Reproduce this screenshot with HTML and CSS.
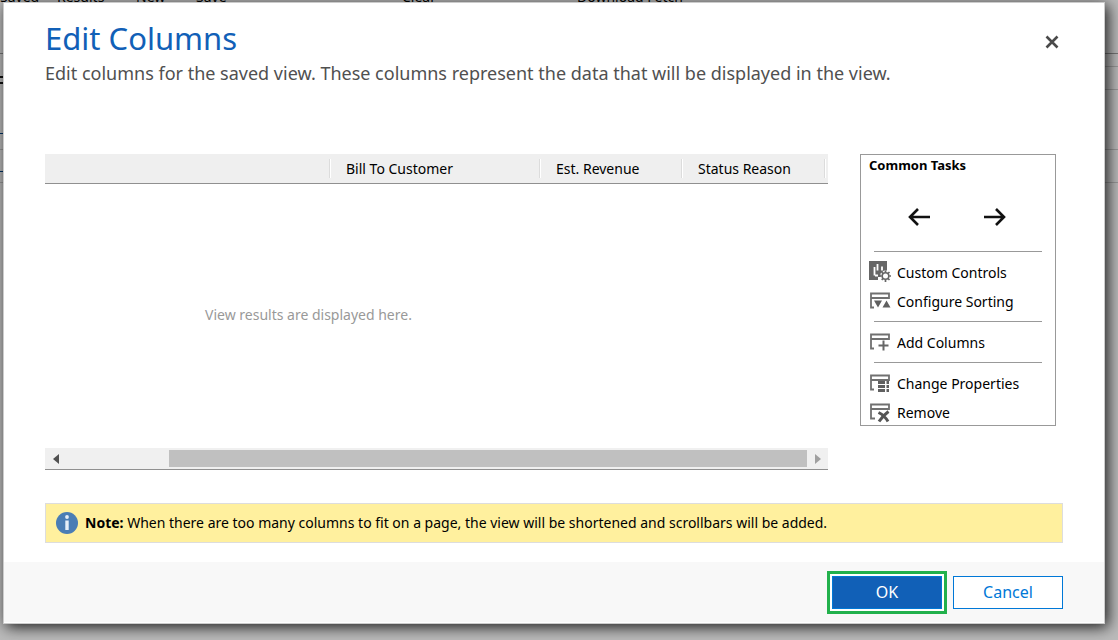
FILE: index.html
```html
<!DOCTYPE html>
<html lang="en">
<head>
<meta charset="utf-8">
<title>Edit Columns</title>
<link rel="stylesheet" href="styles.css">
</head>
<body>
<div class="backdrop" aria-hidden="true">
  <span class="ribbon r-saved">Saved</span><span class="ribbon r-results">Results</span><span class="ribbon r-new">New</span><span class="ribbon r-save">Save</span><span class="ribbon r-clear">Clear</span><span class="ribbon r-fetch">Download Fetch</span>
  <i class="rule rule-a"></i><i class="rule rule-b"></i><i class="rule rule-c"></i><i class="rule rule-d"></i><i class="rule rule-e"></i>
  <i class="mark mark-a"></i><i class="mark mark-b"></i><i class="mark link-a"></i><i class="mark link-b"></i>
</div>
<main class="dialog" role="dialog" aria-labelledby="title">
  <header class="head">
    <div class="heading">
      <h1 class="title" id="title">Edit Columns</h1>
      <p class="subtitle">Edit columns for the saved view. These columns represent the data that will be displayed in the view.</p>
    </div>
    <button class="close" type="button" aria-label="Close"><svg width="14" height="14" viewBox="0 0 14 14"><path d="M1.500 1.500l11 11M12.500 1.500l-11 11" stroke="#4a4a4a" stroke-width="2.600" fill="none"/></svg></button>
  </header>
  <div class="content">
    <section class="view">
      <table class="columns">
        <thead><tr><th class="c-blank"></th><th class="c-bill">Bill To Customer</th><th class="c-rev">Est. Revenue</th><th class="c-status">Status Reason</th></tr></thead>
      </table>
      <p class="empty">View results are displayed here.</p>
      <div class="scrollbar">
        <button type="button" class="arrow" aria-label="Scroll left"><svg width="6" height="10" viewBox="0 0 6 10"><path d="M6 0v10L0 5z" fill="#505050"/></svg></button>
        <div class="track"><div class="thumb"></div></div>
        <button type="button" class="arrow" aria-label="Scroll right"><svg width="6" height="10" viewBox="0 0 6 10"><path d="M0 0v10l6-5z" fill="#a0a0a0"/></svg></button>
      </div>
    </section>
    <aside class="tasks">
      <h2 class="tasks-title">Common Tasks</h2>
      <div class="moves">
        <button type="button" aria-label="Move left"><svg width="24" height="18" viewBox="0 0 24 18"><path d="M23 9H3M11 1L3 9l8 8" fill="none" stroke="#111" stroke-width="2.600"/></svg></button>
        <button type="button" aria-label="Move right"><svg width="24" height="18" viewBox="0 0 24 18"><path d="M1 9h20M13 1l8 8-8 8" fill="none" stroke="#111" stroke-width="2.600"/></svg></button>
      </div>
      <div class="group">
        <button type="button" class="task"><svg width="22" height="22" viewBox="0 0 22 22"><path d="M0 0h18v9.500h-3l-3.500 3V16H9v3H0z" fill="#666"/><path d="M5.500 6v8.500H9M8.500 3v6.500M13 5.500v4" stroke="#fff" stroke-width="1.800" fill="none"/><path d="M0 14.500h6V16H0z" fill="#666"/><circle cx="16.500" cy="15" r="3.300" fill="#fff" stroke="#666" stroke-width="1.600"/><path d="M16.500 9.500v2M16.500 18.500V21M10.800 15h2M20.200 15H22M12.700 11.200l1.300 1.300M19 17.500l1.500 1.500M12.700 18.800l1.300-1.300M19 12.500l1.500-1.500" stroke="#666" stroke-width="1.700"/></svg>Custom Controls</button>
        <button type="button" class="task"><svg width="22" height="22" viewBox="0 0 22 22"><path d="M2 3.500h18V8H2zM2 8v9.500h3" fill="none" stroke="#707070" stroke-width="1.800"/><path d="M5 10.500h8L9 17.500zM13.500 17.500h8l-4-7z" fill="#606060"/></svg>Configure Sorting</button>
      </div>
      <div class="group">
        <button type="button" class="task"><svg width="22" height="22" viewBox="0 0 22 22"><path d="M2 3.500h18V8H2zM2 8v9.500h3" fill="none" stroke="#707070" stroke-width="1.800"/><path d="M14.500 9.500v10M9.500 14.500h10" stroke="#666" stroke-width="2"/></svg>Add Columns</button>
      </div>
      <div class="group">
        <button type="button" class="task"><svg width="22" height="22" viewBox="0 0 22 22"><path d="M2 3.500h18V8H2zM2 8v9.500h3" fill="none" stroke="#707070" stroke-width="1.800"/><path d="M9 9h7v3H9zM9 13h7v3H9zM9 17h7v3H9zM17.500 9H20v3h-2.500zM17.500 13H20v3h-2.500zM17.500 17H20v3h-2.500z" fill="#606060"/></svg>Change Properties</button>
        <button type="button" class="task"><svg width="22" height="22" viewBox="0 0 22 22"><path d="M2 3.500h18V8H2zM2 8v9.500h4" fill="none" stroke="#707070" stroke-width="1.800"/><path d="M9.500 11.500c4 2 7 4.500 9.500 9M19.500 10.500c-4 3-7 6-9.500 10" fill="none" stroke="#555" stroke-width="3"/></svg>Remove</button>
      </div>
    </aside>
  </div>
  <p class="note"><svg width="22" height="22" viewBox="0 0 22 22"><circle cx="11" cy="11" r="11" fill="#4a7db5"/><circle cx="11" cy="5" r="1.900" fill="#e6eef8"/><path d="M9.300 8.500h3.400V18H9.300z" fill="#e6eef8"/></svg><span><b>Note:</b> When there are too many columns to fit on a page, the view will be shortened and scrollbars will be added.</span></p>
  <footer class="foot">
    <span class="highlight"><button type="button" class="btn primary">OK</button></span>
    <button type="button" class="btn">Cancel</button>
  </footer>
</main>
</body>
</html>
```

FILE: styles.css
```css
* { box-sizing: border-box; }
body {
  margin: 0;
  min-height: 100vh;
  padding: 2px 13px 16px 3px;
  display: flex;
  background: #bbb;
  font: 14px/20px "Noto Sans", "Open Sans", sans-serif;
  color: #000;
}
button { font: inherit; color: inherit; border: 0; padding: 0; background: none; cursor: pointer; }
svg { display: block; flex: none; }
h1, h2, p { margin: 0; }

.backdrop { position: absolute; inset: 0; overflow: hidden; }
.ribbon { position: absolute; top: -13px; line-height: 20px; color: #000; white-space: nowrap; }
.r-saved { left: 0; }
.r-results { left: 57px; }
.r-new { left: 136px; }
.r-save { left: 196px; }
.r-clear { left: 402px; }
.r-fetch { left: 577px; }
.rule { position: absolute; left: 0; right: 0; height: 1px; background: #999; }
.rule-a { top: 53px; background: #777; }
.rule-b { top: 66px; left: 50%; }
.rule-c { top: 89px; left: 50%; }
.rule-d { top: 149px; }
.rule-e { top: 182px; }
.mark { position: absolute; left: 0; width: 3px; height: 2px; background: #111; }
.mark-a { top: 76px; }
.mark-b { top: 82px; }
.link-a { top: 133px; height: 1px; background: #036; }
.link-b { top: 171px; height: 1px; background: #036; }

.dialog {
  position: relative;
  flex: 1;
  min-width: 0;
  display: flex;
  flex-direction: column;
  background: #fff;
  border: 1px solid #ccc;
  box-shadow: 3px 3px 14px rgba(0, 0, 0, .85);
}
.head { display: flex; justify-content: space-between; padding: 15px 45px 0 41px; }
.title { font-size: 31px; line-height: 41px; font-weight: 400; color: #1160b7; }
.subtitle { font-size: 18px; line-height: 28px; color: #505050; }
.close { align-self: flex-start; margin-top: 17px; }

.content { display: flex; gap: 32px; padding: 67px 48px 0 41px; }
.view { flex: 1; min-width: 0; display: flex; flex-direction: column; height: 316px; border-bottom: 1px solid #909090; }
.columns { width: 100%; table-layout: fixed; border-collapse: collapse; background: #efefef; border-bottom: 1px solid #909090; }
.columns th { height: 29px; padding: 2px 0 0 13px; text-align: left; font-weight: 400; background: linear-gradient(#fff, #fff) right 2px center / 1px 19px no-repeat, linear-gradient(#dcdcdc, #dcdcdc) right 3px center / 1px 19px no-repeat; }
.c-blank { width: 288px; }
.c-bill { width: 210px; }
.c-rev { width: 142px; }
.empty { flex: 1; padding: 121px 0 0 160px; color: #999; }
.scrollbar { display: flex; height: 21px; background: #f0f0f0; align-items: center; }
.arrow { width: 21px; display: flex; justify-content: center; }
.track { flex: 1; padding-left: 103px; }
.thumb { height: 17px; background: #c0c0c0; }

.tasks { width: 196px; height: 272px; border: 1px solid #999; padding: 0 8px; }
.tasks-title { font-size: 13px; line-height: 20px; font-weight: 700; }
.moves { display: flex; gap: 52px; padding: 33px 0 25px 38px; }
.group { position: relative; padding: 7px 0 5px; }
.group::before { content: ""; position: absolute; top: 0; left: 5px; right: 5px; border-top: 1px solid #999; }
.task { display: flex; align-items: center; gap: 6px; width: 100%; height: 29px; text-align: left; }
.task svg { margin-bottom: 2px; }

.note { display: flex; align-items: center; gap: 7px; margin: 33px 41px 0; padding: 0 10px; min-height: 40px; background: #fff09e; border: 1px solid #ddd; }
.foot { display: flex; justify-content: flex-end; align-items: center; gap: 6px; margin-top: auto; padding: 8px 41px; background: #f8f8f8; min-height: 60px; margin-bottom: 1px; }
.highlight { padding: 2px; border: 3px solid #22b14c; background: #fff; }
.btn { display: block; width: 110px; height: 33px; border: 1px solid #0078d7; background: #fff; color: #0078d7; font-size: 16px; }
.primary { background: #1160b7; color: #fff; }
```
